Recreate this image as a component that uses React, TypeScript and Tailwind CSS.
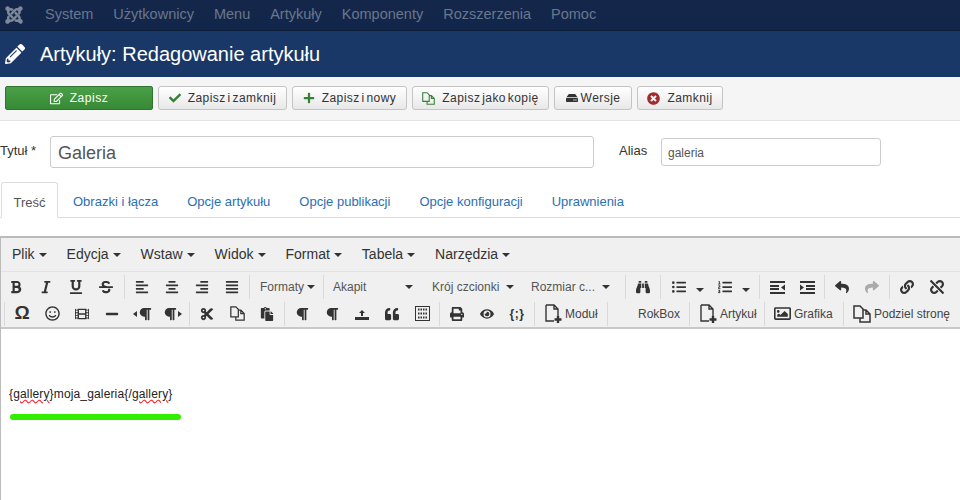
import { ReactNode } from 'react';
import {
  FaJoomla,
  FaPencilAlt,
  FaRegEdit,
  FaCheck,
  FaPlus,
  FaHdd,
  FaTimesCircle,
  FaBold,
  FaItalic,
  FaUnderline,
  FaStrikethrough,
  FaAlignLeft,
  FaAlignCenter,
  FaAlignRight,
  FaAlignJustify,
  FaBinoculars,
  FaListUl,
  FaListOl,
  FaReply,
  FaShare,
  FaLink,
  FaUnlink,
  FaRegSmile,
  FaFilm,
  FaMinus,
  FaParagraph,
  FaCut,
  FaPaste,
  FaQuoteLeft,
  FaPrint,
  FaEye,
  FaRegImage,
} from 'react-icons/fa';

const navItems = ['System', 'Użytkownicy', 'Menu', 'Artykuły', 'Komponenty', 'Rozszerzenia', 'Pomoc'];

const menuItems = ['Plik', 'Edycja', 'Wstaw', 'Widok', 'Format', 'Tabela', 'Narzędzia'];

const tabs = ['Obrazki i łącza', 'Opcje artykułu', 'Opcje publikacji', 'Opcje konfiguracji', 'Uprawnienia'];

function ActionButton({ icon, label, width }: { icon: ReactNode; label: string; width: string }) {
  return (
    <button className={`${width} flex h-[24px] items-center justify-center gap-[7px] rounded-[3px] border border-[#c4c4c4] bg-gradient-to-b from-white to-[#e8e8e8] text-[12px] tracking-[0.45px] text-[#333] [word-spacing:-2px]`}>
      {icon}
      {label}
    </button>
  );
}

function Caret() {
  return <span className="inline-block border-x-[4px] border-t-[4px] border-x-transparent border-t-[#333]" />;
}

function Sep({ cls = 'mx-[2px]' }: { cls?: string }) {
  return <div className={`${cls} h-[24px] w-px shrink-0 bg-[#d9d9d9]`} />;
}

function Btn({ children }: { children: ReactNode }) {
  return <div className="flex h-[24px] w-[30px] shrink-0 items-center justify-center text-[14px] text-[#333]">{children}</div>;
}

function Drop({ label, width, gap }: { label: string; width: string; gap: string }) {
  return (
    <div className={`${width} flex h-[24px] items-center pl-[7px] text-[12px] text-[#555]`}>
      <span className={gap}>{label}</span>
      <Caret />
    </div>
  );
}

function TextBtn({ icon, label, width }: { icon: ReactNode; label: string; width: string }) {
  return (
    <div className={`${width} flex h-[24px] shrink-0 items-center gap-[3px] whitespace-nowrap pl-[7px] text-[12px] text-[#444]`}>
      {icon}
      {label}
    </div>
  );
}

function NewFile() {
  return (
    <svg width="18" height="20" viewBox="0 0 18 20" fill="none" stroke="#333" strokeWidth="1.4">
      <path d="M2 1h8l4 4v8M10 1v4h4M2 1v16h8" />
      <path d="M14 12v7M10.5 15.5h7" strokeWidth="2.4" />
    </svg>
  );
}

function Pages({ size = 18, color = '#333' }: { size?: number; color?: string }) {
  return (
    <svg width={size} height={size} viewBox="0 0 18 18" fill="none" stroke={color} strokeWidth="1.5">
      <path d="M1 1h6l3 3v9H1zM10 5h3l4 4v8H7v-4M13 5v4h4" />
    </svg>
  );
}

function Outdent({ flip }: { flip?: boolean }) {
  return (
    <svg width="15" height="13" viewBox="0 0 15 13" fill="#333" className={flip ? '-scale-x-100' : ''}>
      <path d="M0 0h15v2H0zM0 4h9v2H0zM0 7h9v2H0zM0 11h15v2H0zM15 3.5v6l-4-3z" />
    </svg>
  );
}

function TextDir({ side }: { side: 'left' | 'right' }) {
  return (
    <span className="flex items-center gap-[1px]">
      {side === 'left' && <span className="border-y-[3px] border-r-[4px] border-y-transparent border-r-[#333]" />}
      <FaParagraph />
      {side === 'right' && <span className="border-y-[3px] border-l-[4px] border-y-transparent border-l-[#333]" />}
    </span>
  );
}

function Tray() {
  return (
    <svg width="14" height="12" viewBox="0 0 14 12" fill="#333">
      <path d="M0 9h14v3H0zM7 2l3 3H8v3H6V5H4z" />
    </svg>
  );
}

function Template() {
  return (
    <svg width="15" height="15" viewBox="0 0 15 15" fill="none" stroke="#333">
      <rect x="0.5" y="0.5" width="14" height="14" />
      <path d="M3 3.5h9M3 7.5h9M3 11.5h9" strokeDasharray="1.5 1" strokeWidth="2" />
    </svg>
  );
}

export default function App() {
  return (
    <div className="h-[500px] w-[960px] overflow-hidden bg-white font-['Liberation_Sans',Arial,sans-serif]">
      {/* Top nav */}
      <div className="flex h-[31px] items-center gap-[20px] border-b border-[#0c1d38] bg-gradient-to-b from-[#14274b] to-[#11264a] pl-[4px] text-[14.5px] text-[#69778d]">
        <FaJoomla className="mr-[1px] text-[20px] text-[#7d8898]" />
        {navItems.map((item) => (
          <span key={item}>{item}</span>
        ))}
      </div>

      {/* Page title */}
      <div className="flex h-[46px] items-center bg-[#1a3867] pl-[5px] text-white">
        <FaPencilAlt className="text-[20px]" />
        <h1 className="ml-[15px] text-[20px]">Artykuły: Redagowanie artykułu</h1>
      </div>

      {/* Action toolbar */}
      <div className="flex h-[44px] gap-[5px] border-b border-[#e3e3e3] bg-[#f5f5f5] pl-[5px] pt-[9px]">
        <button className="flex h-[24px] w-[148px] items-center justify-center gap-[7px] rounded-[2px] border border-[#2f7530] bg-gradient-to-b from-[#4a9f47] to-[#378a36] text-[12px] tracking-[0.55px] text-white">
          <FaRegEdit className="text-[13px]" />
          Zapisz
        </button>
        <ActionButton width="w-[129px]" icon={<FaCheck className="text-[12px] text-[#378137]" />} label="Zapisz i zamknij" />
        <ActionButton width="w-[115px]" icon={<FaPlus className="text-[12px] text-[#378137]" />} label="Zapisz i nowy" />
        <ActionButton width="w-[137px]" icon={<Pages size={13} color="#378137" />} label="Zapisz jako kopię" />
        <ActionButton width="w-[78px]" icon={<FaHdd className="-mr-[4px] text-[12px] text-[#333]" />} label="Wersje" />
        <ActionButton width="w-[86px]" icon={<FaTimesCircle className="text-[13px] text-[#a32b2b]" />} label="Zamknij" />
      </div>

      {/* Title + alias */}
      <div className="flex h-[61px] items-start pt-[15px]">
        <label className="mt-[5px] w-[50px] text-[13px] text-[#333]">Tytuł *</label>
        <div className="flex h-[32px] w-[544px] items-center rounded-[3px] border border-[#ccc] pl-[7px] pt-[2px] text-[18px] text-[#555]">
          Galeria
        </div>
        <label className="ml-[25px] mt-[5px] w-[42px] text-[13px] text-[#333]">Alias</label>
        <div className="mt-[2px] flex h-[28px] w-[220px] items-center rounded-[3px] border border-[#ccc] pl-[6px] pt-[2px] text-[12px] text-[#555]">
          galeria
        </div>
      </div>

      {/* Tabs */}
      <div className="flex h-[36px] border-b border-[#ddd] text-[13px] text-[#2a6fb5]">
        <div className="ml-px h-[36px] w-[57px] rounded-t-[3px] border border-[#ddd] border-b-white bg-white pt-[10px] text-center text-[#555]">
          Treść
        </div>
        <div className="flex gap-[29px] pl-[15px] pt-[10px]">
          {tabs.map((tab) => (
            <span key={tab}>{tab}</span>
          ))}
        </div>
      </div>

      {/* Editor */}
      <div className="mt-[18px] h-[264px] border-l border-t-2 border-[#bbb]">
        <div className="flex h-[34px] items-center gap-[20px] border-b border-[#e2e2e2] bg-[#f0f0f0] pl-[11px] text-[14px] text-[#333]">
          {menuItems.map((item) => (
            <span key={item} className="flex items-center gap-[4px]">
              {item}
              <Caret />
            </span>
          ))}
        </div>

        <div className="h-[57px] border-b-2 border-[#c8c8c8] bg-[#f0f0f0]">
          <div className="flex h-[28px] items-center pt-[2px]">
            <Btn><FaBold /></Btn>
            <Btn><FaItalic /></Btn>
            <Btn><FaUnderline /></Btn>
            <Btn><FaStrikethrough /></Btn>
            <Sep cls="ml-[3px] mr-[2px]" />
            <Btn><FaAlignLeft /></Btn>
            <Btn><FaAlignCenter /></Btn>
            <Btn><FaAlignRight /></Btn>
            <Btn><FaAlignJustify /></Btn>
            <Sep cls="ml-[2px] mr-[3px]" />
            <Drop label="Formaty" width="w-[67px]" gap="mr-[3px]" />
            <Sep cls="ml-[3px] mr-[2px]" />
            <Drop label="Akapit" width="w-[99px]" gap="mr-[39px]" />
            <Drop label="Krój czcionki" width="w-[99px]" gap="mr-[7px]" />
            <Drop label="Rozmiar c..." width="w-[99px]" gap="mr-[7px]" />
            <Sep />
            <Btn><FaBinoculars /></Btn>
            <Sep cls="ml-[2px] mr-[3px]" />
            <Btn><FaListUl /></Btn>
            <div className="w-[16px] pl-[2px]"><Caret /></div>
            <Btn><FaListOl /></Btn>
            <div className="w-[16px] pl-[2px]"><Caret /></div>
            <Sep cls="ml-[3px] mr-[2px]" />
            <Btn><Outdent /></Btn>
            <Btn><Outdent flip /></Btn>
            <Sep />
            <Btn><FaReply /></Btn>
            <Btn><FaShare className="text-[#aaa]" /></Btn>
            <Sep />
            <Btn><FaLink /></Btn>
            <Btn><FaUnlink /></Btn>
          </div>
          <div className="flex h-[27px] items-center pl-[3px]">
            <div className="mr-[2px] h-[24px] w-px bg-[#d9d9d9]" />
            <Btn><span className="text-[19px] font-bold">Ω</span></Btn>
            <Btn><FaRegSmile className="text-[15px]" /></Btn>
            <Btn><FaFilm /></Btn>
            <Btn><FaMinus /></Btn>
            <Btn><TextDir side="left" /></Btn>
            <Btn><TextDir side="right" /></Btn>
            <Sep />
            <Btn><FaCut /></Btn>
            <Btn><Pages size={15} /></Btn>
            <Btn><FaPaste /></Btn>
            <Sep />
            <Btn><FaParagraph /></Btn>
            <Btn><FaParagraph /></Btn>
            <Btn><Tray /></Btn>
            <Btn><FaQuoteLeft /></Btn>
            <Btn><Template /></Btn>
            <Sep />
            <Btn><FaPrint /></Btn>
            <Btn><FaEye /></Btn>
            <Btn><span className="text-[12px] font-bold tracking-[0.5px]">{'{;}'}</span></Btn>
            <Sep />
            <TextBtn width="w-[68px]" icon={<NewFile />} label="Moduł" />
            <Sep />
            <div className="w-[77px] shrink-0 pl-[28px] text-[12px] text-[#444]">RokBox</div>
            <Sep />
            <TextBtn width="w-[70px]" icon={<NewFile />} label="Artykuł" />
            <Sep />
            <TextBtn width="w-[74px]" icon={<FaRegImage className="text-[17px] text-[#333]" />} label="Grafika" />
            <Sep />
            <TextBtn width="w-[110px]" icon={<Pages />} label="Podziel stronę" />
          </div>
        </div>

        {/* Content */}
        <div className="pl-[8px] pt-[56px] text-[12px] tracking-[0.15px] text-[#222]">
          <p>
            {'{'}
            <span className="underline decoration-wavy decoration-red-500">gallery</span>
            {'}moja_galeria{/'}
            <span className="underline decoration-wavy decoration-red-500">gallery</span>
            {'}'}
          </p>
          <div className="ml-px mt-[11px] h-[6px] w-[171px] rounded-full bg-[#33ee00]" />
        </div>
      </div>
    </div>
  );
}
